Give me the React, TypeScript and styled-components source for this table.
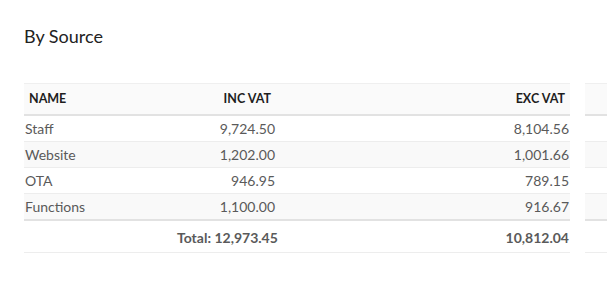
import React from "react";
import styled, { createGlobalStyle } from "styled-components";

const Global = createGlobalStyle`
  html, body { margin: 0; padding: 0; background: #ffffff; }
  body { font-family: Lato, "Open Sans", "Liberation Sans", sans-serif; }
  #root { width: 607px; height: 283px; overflow: hidden; }
`;

const Page = styled.div`
  padding: 26px 0 0 24px;
  box-sizing: border-box;
  width: 607px;
  overflow: hidden;
`;

const Title = styled.h2`
  margin: 0;
  font-size: 18px;
  font-weight: 400;
  line-height: 21.6px;
  color: #222222;
`;

const Panels = styled.div`
  display: flex;
  gap: 15px;
  margin-top: 35px;
  width: 900px;
`;

const Table = styled.div<{ $w: number }>`
  width: ${(p) => p.$w}px;
  flex: none;
  display: flex;
  flex-direction: column;
`;

const Row = styled.div<{ $kind: "head" | "body" | "total"; $striped?: boolean; $last?: boolean }>`
  display: grid;
  grid-template-columns: 152px 100px 294px;
  box-sizing: border-box;
  align-items: center;
  height: ${(p) => (p.$kind === "head" ? 33 : p.$kind === "total" ? 32 : p.$last ? 27 : 26)}px;
  background: ${(p) => (p.$kind === "head" ? "#fafafa" : p.$striped ? "#f9f9f9" : "#ffffff")};
  border-top: ${(p) => (p.$kind === "head" ? "1px solid #efefef" : "none")};
  border-bottom: ${(p) =>
    p.$kind === "head" || p.$last ? "2px solid #e2e2e2" : "1px solid #ededed"};
`;

const Cell = styled.div<{ $kind: "head" | "body" | "total"; $align?: "left" | "right" }>`
  text-align: ${(p) => p.$align ?? "left"};
  padding: ${(p) => (p.$kind === "head" ? "0 5px" : p.$kind === "total" ? "3px 1px 0" : "0 1px")};
  font-size: ${(p) => (p.$kind === "head" ? "12.5px" : "14px")};
  font-weight: ${(p) => (p.$kind === "body" ? 400 : 700)};
  color: ${(p) => (p.$kind === "head" ? "#1e1e1e" : "#5a5a5a")};
  text-transform: ${(p) => (p.$kind === "head" ? "uppercase" : "none")};
  white-space: nowrap;
`;

type Item = { name: string; inc: string; exc: string };

const items: Item[] = [
  { name: "Staff", inc: "9,724.50", exc: "8,104.56" },
  { name: "Website", inc: "1,202.00", exc: "1,001.66" },
  { name: "OTA", inc: "946.95", exc: "789.15" },
  { name: "Functions", inc: "1,100.00", exc: "916.67" },
];

function SourceTable({ width, data, total }: { width: number; data: Item[]; total?: { inc: string; exc: string } }) {
  return (
    <Table $w={width} role="table">
      <Row $kind="head" role="row">
        <Cell $kind="head">{total ? "Name" : ""}</Cell>
        <Cell $kind="head" $align="right">{total ? "Inc VAT" : ""}</Cell>
        <Cell $kind="head" $align="right">{total ? "Exc VAT" : ""}</Cell>
      </Row>
      {data.map((it, i) => (
        <Row key={i} $kind="body" $striped={i % 2 === 1} $last={i === data.length - 1} role="row">
          <Cell $kind="body">{it.name}</Cell>
          <Cell $kind="body" $align="right">{it.inc}</Cell>
          <Cell $kind="body" $align="right">{it.exc}</Cell>
        </Row>
      ))}
      <Row $kind="total" role="row">
        <Cell $kind="total" />
        <Cell $kind="total" $align="right">{total ? `Total: ${total.inc}` : ""}</Cell>
        <Cell $kind="total" $align="right">{total ? total.exc : ""}</Cell>
      </Row>
    </Table>
  );
}

export default function App() {
  const blank: Item[] = items.map(() => ({ name: "", inc: "", exc: "" }));
  return (
    <>
      <Global />
      <Page>
        <Title>By Source</Title>
        <Panels>
          <SourceTable width={546} data={items} total={{ inc: "12,973.45", exc: "10,812.04" }} />
          <SourceTable width={300} data={blank} />
        </Panels>
      </Page>
    </>
  );
}
